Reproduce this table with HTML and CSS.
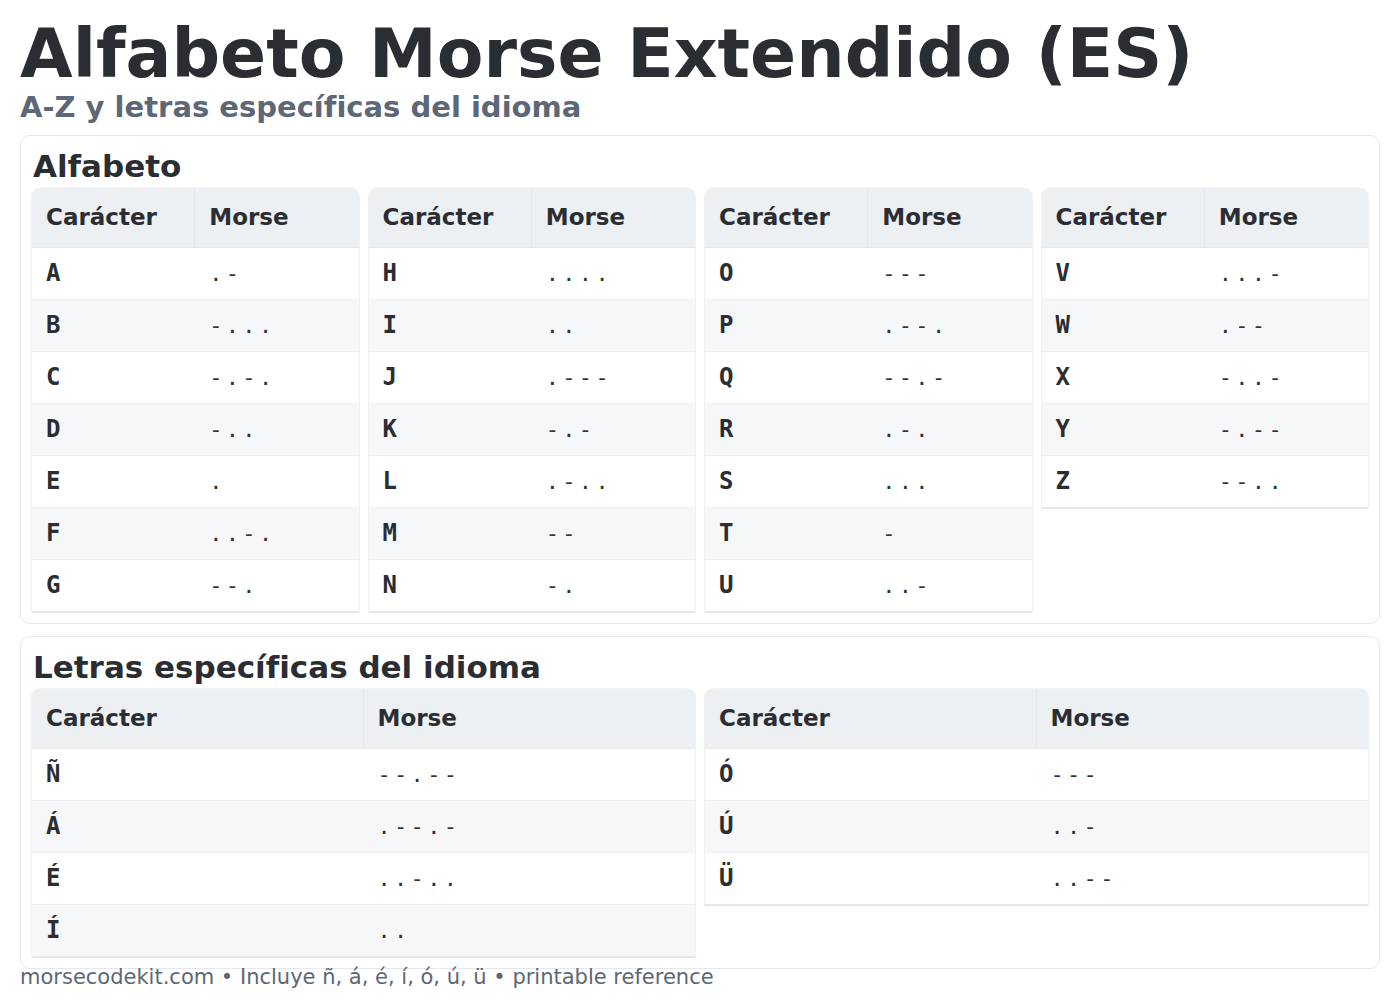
FILE: index.html
```html
<!DOCTYPE html>
<html lang="es">
<head>
<meta charset="utf-8">
<title>Alfabeto Morse Extendido (ES)</title>
<link rel="stylesheet" href="styles.css">
</head>
<body>
<header class="page-head">
  <h1 class="title">Alfabeto Morse Extendido (ES)</h1>
  <p class="subtitle">A-Z y letras específicas del idioma</p>
</header>

<section class="card">
  <h2 class="card-title">Alfabeto</h2>
  <div class="grid grid-4">
    <table class="mtable">
      <thead><tr><th>Carácter</th><th>Morse</th></tr></thead>
      <tbody>
        <tr><td class="ch">A</td><td class="mc">.-</td></tr>
        <tr><td class="ch">B</td><td class="mc">-...</td></tr>
        <tr><td class="ch">C</td><td class="mc">-.-.</td></tr>
        <tr><td class="ch">D</td><td class="mc">-..</td></tr>
        <tr><td class="ch">E</td><td class="mc">.</td></tr>
        <tr><td class="ch">F</td><td class="mc">..-.</td></tr>
        <tr><td class="ch">G</td><td class="mc">--.</td></tr>
      </tbody>
    </table>
    <table class="mtable">
      <thead><tr><th>Carácter</th><th>Morse</th></tr></thead>
      <tbody>
        <tr><td class="ch">H</td><td class="mc">....</td></tr>
        <tr><td class="ch">I</td><td class="mc">..</td></tr>
        <tr><td class="ch">J</td><td class="mc">.---</td></tr>
        <tr><td class="ch">K</td><td class="mc">-.-</td></tr>
        <tr><td class="ch">L</td><td class="mc">.-..</td></tr>
        <tr><td class="ch">M</td><td class="mc">--</td></tr>
        <tr><td class="ch">N</td><td class="mc">-.</td></tr>
      </tbody>
    </table>
    <table class="mtable">
      <thead><tr><th>Carácter</th><th>Morse</th></tr></thead>
      <tbody>
        <tr><td class="ch">O</td><td class="mc">---</td></tr>
        <tr><td class="ch">P</td><td class="mc">.--.</td></tr>
        <tr><td class="ch">Q</td><td class="mc">--.-</td></tr>
        <tr><td class="ch">R</td><td class="mc">.-.</td></tr>
        <tr><td class="ch">S</td><td class="mc">...</td></tr>
        <tr><td class="ch">T</td><td class="mc">-</td></tr>
        <tr><td class="ch">U</td><td class="mc">..-</td></tr>
      </tbody>
    </table>
    <table class="mtable">
      <thead><tr><th>Carácter</th><th>Morse</th></tr></thead>
      <tbody>
        <tr><td class="ch">V</td><td class="mc">...-</td></tr>
        <tr><td class="ch">W</td><td class="mc">.--</td></tr>
        <tr><td class="ch">X</td><td class="mc">-..-</td></tr>
        <tr><td class="ch">Y</td><td class="mc">-.--</td></tr>
        <tr><td class="ch">Z</td><td class="mc">--..</td></tr>
      </tbody>
    </table>
  </div>
</section>

<section class="card">
  <h2 class="card-title">Letras específicas del idioma</h2>
  <div class="grid grid-2">
    <table class="mtable">
      <thead><tr><th>Carácter</th><th>Morse</th></tr></thead>
      <tbody>
        <tr><td class="ch">Ñ</td><td class="mc">--.--</td></tr>
        <tr><td class="ch">Á</td><td class="mc">.--.-</td></tr>
        <tr><td class="ch">É</td><td class="mc">..-..</td></tr>
        <tr><td class="ch">Í</td><td class="mc">..</td></tr>
      </tbody>
    </table>
    <table class="mtable">
      <thead><tr><th>Carácter</th><th>Morse</th></tr></thead>
      <tbody>
        <tr><td class="ch">Ó</td><td class="mc">---</td></tr>
        <tr><td class="ch">Ú</td><td class="mc">..-</td></tr>
        <tr><td class="ch">Ü</td><td class="mc">..--</td></tr>
      </tbody>
    </table>
  </div>
</section>

<footer class="foot">morsecodekit.com • Incluye ñ, á, é, í, ó, ú, ü • printable reference</footer>
</body>
</html>
```
FILE: styles.css
```css
html, body {
  margin: 0;
  padding: 0;
  background: #ffffff;
}

body {
  padding: 20px 20px 20px 20px;
  font-family: "DejaVu Sans", "Liberation Sans", sans-serif;
  color: #2a2d32;
}

.page-head {
  margin: 0;
}

.title {
  margin: 0;
  font-size: 68px;
  line-height: 68px;
  font-weight: bold;
  color: #2a2d32;
}

.subtitle {
  margin: 2px 0 0 0;
  font-size: 29px;
  line-height: 34px;
  font-weight: bold;
  color: #5c6777;
}

.card {
  margin-top: 11px;
  border: 1px solid #e4e7eb;
  border-radius: 10px;
  padding: 11px;
  background: #ffffff;
}

.card + .card {
  margin-top: 12px;
}

.card-title {
  margin: 0 0 3px 1px;
  font-size: 31px;
  line-height: 38px;
  font-weight: bold;
  color: #2a2d32;
}

.grid {
  display: grid;
  column-gap: 10px;
  align-items: start;
}

.grid-4 {
  grid-template-columns: repeat(4, 1fr);
}

.grid-2 {
  grid-template-columns: repeat(2, 1fr);
}

.mtable {
  width: 100%;
  border-collapse: separate;
  border-spacing: 0;
  table-layout: fixed;
  border-radius: 8px 8px 0 0;
  box-shadow: 0 1px 1px rgba(0, 0, 0, 0.06), 0 0 0 1px #f1f2f4;
  background: #ffffff;
}

.mtable th {
  background: #edf0f3;
  text-align: left;
  font-size: 23px;
  line-height: 26px;
  font-weight: bold;
  padding: 16px 14px 17px 14px;
  border-bottom: 1px solid #e6e9ec;
  color: #2a2d32;
}

.mtable th:first-child {
  border-right: 1px solid #e3e6ea;
  border-top-left-radius: 8px;
}

.mtable th:last-child {
  border-top-right-radius: 8px;
}

.mtable td {
  padding: 12px 14px;
  line-height: 27px;
  border-bottom: 1px solid #eceef1;
}

.mtable tbody tr:nth-child(even) td {
  background: #f6f7f9;
}

.mtable tbody tr:last-child td {
  border-bottom: 1px solid #e6e8eb;
}

.mtable td:first-child {
  padding-right: 15px;
}

.ch {
  font-family: "DejaVu Sans Mono", "Liberation Mono", monospace;
  font-weight: bold;
  font-size: 24px;
  color: #2a2d32;
}

.mc {
  font-family: "DejaVu Sans Mono", "Liberation Mono", monospace;
  font-size: 22px;
  letter-spacing: 3.3px;
  color: #2f3338;
}

.foot {
  margin: 0;
  font-size: 21px;
  line-height: 16px;
  color: #5c6777;
}
```
